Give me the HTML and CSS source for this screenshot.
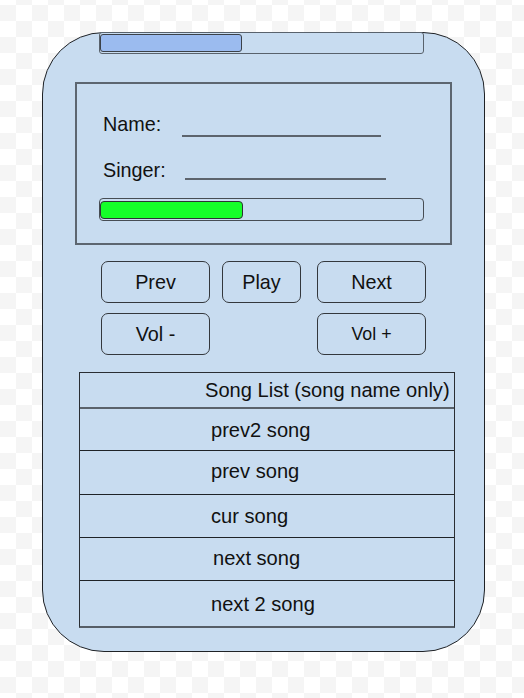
FILE: index.html
```html
<!DOCTYPE html>
<html lang="en">
<head>
<meta charset="utf-8">
<title>Music Player Mockup</title>
<link rel="stylesheet" href="styles.css">
</head>
<body>
  <div class="phone">
    <div class="topbar"><div class="topbar-fill"></div></div>

    <div class="info">
      <div class="field field-name">
        <span class="label label-name">Name:</span>
        <span class="line line-name"></span>
      </div>
      <div class="field field-singer">
        <span class="label label-singer">Singer:</span>
        <span class="line line-singer"></span>
      </div>
      <div class="progress"><div class="progress-fill"></div></div>
    </div>

    <div class="controls">
      <div class="btn btn-wide">Prev</div>
      <div class="btn btn-play">Play</div>
      <div class="btn btn-wide">Next</div>
      <div class="btn btn-wide">Vol -</div>
      <div class="spacer"></div>
      <div class="btn btn-wide btn-small">Vol +</div>
    </div>

    <div class="songs">
      <div class="row row-head">Song List (song name only)</div>
      <div class="row row-1">prev2 song</div>
      <div class="row row-2">prev song</div>
      <div class="row row-3">cur song</div>
      <div class="row row-4">next song</div>
      <div class="row row-5">next 2 song</div>
    </div>
  </div>
</body>
</html>
```

FILE: styles.css
```css
* { box-sizing: border-box; }

html, body {
  margin: 0;
  padding: 0;
}

body {
  width: 524px;
  height: 698px;
  padding: 32px 0 0 42px;
  background-color: #fff;
  background-image: conic-gradient(#fff 25%, #f5f5f5 0 50%, #fff 0 75%, #f5f5f5 0);
  background-size: 32px 32px;
  background-position: 0 5px;
  font-family: "Liberation Sans", Arial, sans-serif;
  color: #111;
  overflow: hidden;
}

.phone {
  width: 443px;
  height: 620px;
  border: 1px solid #1f2226;
  border-radius: 62px;
  background: #c8dcf0;
  display: flex;
  flex-direction: column;
  align-items: flex-start;
}

/* top progress bar on the phone edge */
.topbar {
  margin-top: -1px;
  margin-left: 56px;
  width: 325px;
  height: 22px;
  border: 1px solid #59626c;
  border-radius: 3px;
  padding: 1px 0;
  background: #c8dcf0;
}
.topbar-fill {
  width: 142px;
  height: 18px;
  border: 1px solid #3b4148;
  border-radius: 3px;
  background: #9bbbef;
}

/* info panel */
.info {
  margin-top: 28px;
  margin-left: 32px;
  width: 377px;
  height: 163px;
  border: 2px solid #5d6670;
  padding: 30px 0 0 26px;
  display: flex;
  flex-direction: column;
  align-items: flex-start;
}

.field {
  display: flex;
  align-items: flex-start;
}
.field-singer { margin-top: 20px; }

.label {
  font-size: 19.8px;
  line-height: 20px;
  white-space: nowrap;
}
.label-name { width: 79px; }
.label-singer { width: 82px; padding-top: 3px; }

.line {
  display: block;
  height: 23px;
  border-bottom: 2px solid #5d646d;
}
.line-name { width: 199px; }
.line-singer { width: 201px; }

.progress {
  margin-top: 18px;
  margin-left: -4px;
  width: 325px;
  height: 23px;
  border: 1px solid #474d54;
  border-radius: 4px;
  padding: 2px 0 0 0;
}
.progress-fill {
  width: 143px;
  height: 18px;
  border: 1px solid #2e3236;
  border-radius: 4px;
  background: #15ff2a;
}

/* control buttons */
.controls {
  margin-top: 16px;
  margin-left: 58px;
  display: grid;
  grid-template-columns: 121px 95px 109px;
  grid-auto-rows: 42px;
  row-gap: 10px;
}

.btn {
  height: 42px;
  border: 1px solid #34383d;
  border-radius: 7px;
  display: flex;
  align-items: center;
  justify-content: center;
  font-size: 19.8px;
  line-height: 20px;
}
.btn-wide { width: 109px; }
.btn-play { width: 79px; }
.btn-small { font-size: 17.8px; }

/* song list table */
.songs {
  margin-top: 17px;
  margin-left: 36px;
  width: 376px;
  height: 256px;
  border: 1px solid #2a2e33;
  border-bottom: 2px solid #565e67;
  display: flex;
  flex-direction: column;
}

.row {
  font-size: 20.1px;
  line-height: 20px;
  padding-left: 131px;
  border-bottom: 1px solid #1f2327;
  white-space: nowrap;
}
.row-head {
  height: 36px;
  padding-top: 7px;
  padding-left: 125px;
  border-bottom: 2px solid #5a626b;
}
.row-1 { height: 42px; padding-top: 11px; }
.row-2 { height: 44px; padding-top: 10px; }
.row-3 { height: 43px; padding-top: 11px; }
.row-4 { height: 43px; padding-top: 10px; padding-left: 133px; }
.row-5 { height: 45px; padding-top: 13px; border-bottom: none; }
```
